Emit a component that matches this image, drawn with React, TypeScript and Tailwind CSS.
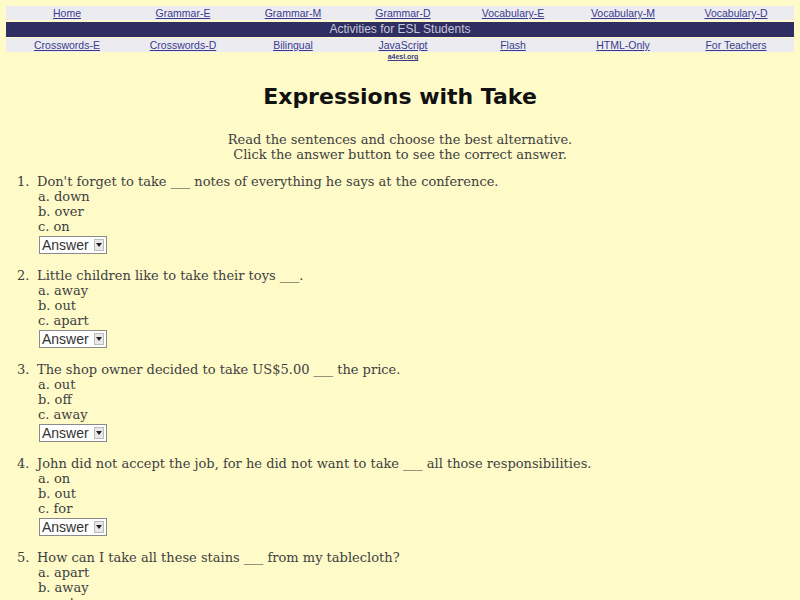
import { ReactNode } from 'react'

const TOP_LINKS = ['Home', 'Grammar-E', 'Grammar-M', 'Grammar-D', 'Vocabulary-E', 'Vocabulary-M', 'Vocabulary-D']
const BOTTOM_LINKS = ['Crosswords-E', 'Crosswords-D', 'Bilingual', 'JavaScript', 'Flash', 'HTML-Only', 'For Teachers']

const QUESTIONS = [
  { q: "Don't forget to take ___ notes of everything he says at the conference.", opts: ['down', 'over', 'on'] },
  { q: 'Little children like to take their toys ___.', opts: ['away', 'out', 'apart'] },
  { q: 'The shop owner decided to take US$5.00 ___ the price.', opts: ['out', 'off', 'away'] },
  { q: 'John did not accept the job, for he did not want to take ___ all those responsibilities.', opts: ['on', 'out', 'for'] },
  { q: 'How can I take all these stains ___ from my tablecloth?', opts: ['apart', 'away', 'out'] },
]

function NavRow({ links, children }: { links: string[]; children?: ReactNode }) {
  return (
    <div className="grid grid-cols-[122px_110px_110px_110px_110px_110px_1fr] bg-[#ececf0] h-[14px]">
      {links.map(l => (
        <div key={l} className="text-center relative text-[10.5px] leading-[14px]">
          <a href="#" className="text-[#3a3a8c] underline">{l}</a>
          {l === 'JavaScript' && children}
        </div>
      ))}
    </div>
  )
}

function AnswerSelect() {
  return (
    <div className="flex items-center w-[68px] h-[18px] border border-[#8a8a8a] bg-white">
      <span className="text-[14px] leading-[16px] text-[#333] pl-[2px] font-['Liberation_Sans',sans-serif]">Answer</span>
      <span className="ml-auto mr-[2px] w-[10px] h-[12px] bg-[#e8e8e8] border border-[#bbb] flex items-center justify-center">
        <svg width="6" height="4" viewBox="0 0 6 4"><path d="M0 0h6L3 4z" fill="#222" /></svg>
      </span>
    </div>
  )
}

export default function App() {
  return (
    <div className="h-[600px] bg-[#fefbc9] font-['DejaVu_Serif',serif] text-[#404040] overflow-hidden">
      {/* site navigation */}
      <div className="pt-[6px] px-[6px] font-['Liberation_Sans',sans-serif]">
        <NavRow links={TOP_LINKS} />
        <div className="mt-[2px] h-[15px] bg-[#2e2e62] text-center text-[12px] leading-[15px] text-[#c8c8d8]">
          Activities for ESL Students
        </div>
        <div className="mt-[1px]">
          <NavRow links={BOTTOM_LINKS}>
            <div className="absolute left-0 right-0 top-[15px] text-center text-[7px] leading-[8px] font-bold text-[#3a3a8c] underline">a4esl.org</div>
          </NavRow>
        </div>
      </div>

      <h1 className="mt-[31px] text-center text-[22px] leading-[28px] font-bold text-[#111] font-['Comic_Sans_MS','DejaVu_Sans',sans-serif]">
        Expressions with Take
      </h1>

      <div className="mt-[21px] text-center text-[13px] leading-[15px]">
        <p>Read the sentences and choose the best alternative.</p>
        <p>Click the answer button to see the correct answer.</p>
      </div>

      <ol className="mt-[12px] pl-[37px] text-[13px] leading-[15px]">
        {QUESTIONS.map((item, i) => (
          <li key={i} className="mb-[14px] relative">
            <span className="absolute -left-[20px]">{i + 1}.</span>
            <div>{item.q}</div>
            {item.opts.map((o, j) => (
              <div key={o} className="pl-[1px]">{String.fromCharCode(97 + j)}. {o}</div>
            ))}
            <div className="pl-[2px] pt-[2px]">
              <AnswerSelect />
            </div>
          </li>
        ))}
      </ol>
    </div>
  )
}
